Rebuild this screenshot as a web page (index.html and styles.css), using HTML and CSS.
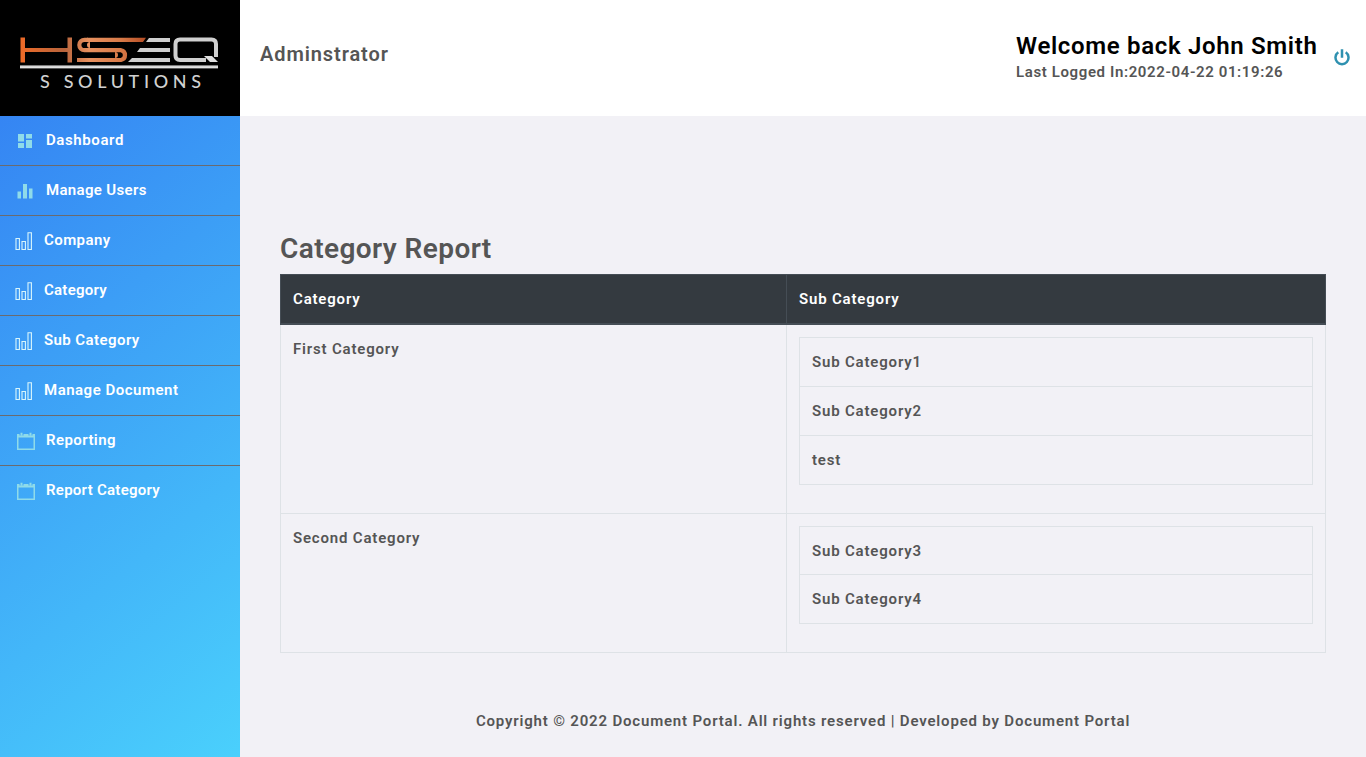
FILE: index.html
```html
<!DOCTYPE html>
<html lang="en">
<head>
<meta charset="utf-8">
<title>Category Report</title>
<link rel="stylesheet" href="styles.css">
</head>
<body>
<svg width="0" height="0" class="defs" aria-hidden="true">
  <symbol id="bars" viewBox="0 0 18 20"><path d="M1 7.500h3.400v11H1zM7 10.500h3.400v8H7zM13 1.800h3.400v16.700H13z" fill="none" stroke="#d9f6fb" stroke-width="1.100"/></symbol>
  <symbol id="calendar" viewBox="0 0 18 18"><path d="M0 2h2.500v1.500h4V2h5v1.500h4V2H18V18H0zM1.500 5.500V16.500h15V5.500z" fill-rule="evenodd"/><path d="M3.500 .8h2v3h-2zM12.500 .8h2v3h-2z"/></symbol>
</svg>
<div class="app">
  <aside class="sidebar">
    <div class="brand">
      <svg class="logo" width="240" height="116" viewBox="0 0 240 116">
        <defs>
          <linearGradient id="copper" gradientUnits="userSpaceOnUse" x1="20" y1="0" x2="146" y2="0"><stop offset="0" stop-color="#ee6a27"/><stop offset=".35" stop-color="#b7643c"/><stop offset=".55" stop-color="#e8915f"/><stop offset=".8" stop-color="#d87a48"/><stop offset="1" stop-color="#b64d24"/></linearGradient>
          <linearGradient id="silver" x1="0" y1="0" x2="0" y2="1"><stop offset="0" stop-color="#a8a8a8"/><stop offset=".6" stop-color="#f2f2f2"/><stop offset="1" stop-color="#aaa"/></linearGradient>
        </defs>
        <g fill="url(#copper)"><rect x="20.500" y="37.500" width="4.500" height="25"/><rect x="67.500" y="37.500" width="4.500" height="25"/><rect x="25" y="48" width="43" height="4"/><path d="M87 37.700h59l-3 4.300H87zM90 42a3 3 0 0 0-3 3a3 3 0 0 0 3 3zM115 52a3 3 0 0 1 3 3a3 3 0 0 1-3 3z"/></g>
        <g fill="none" stroke="url(#copper)">
          <path d="M88 39.800H84.500a5.200 5.200 0 0 0 0 10.400h36.500a5 5 0 0 1 0 9.800H77" stroke-width="4.200"/>
        </g>
        <g fill="#cfcfcf"><path d="M149 38h21v4h-24zM140 48h30v4h-33zM132 58h38v4h-42z"/></g>
        <path d="M206 60h-26q-4.500 0-4.500-4.500V44q0-4.500 4.500-4.500h31.500q4.500 0 4.500 4.500v13" fill="none" stroke="#d0d0d0" stroke-width="4"/>
        <path d="M204 56h8l6 6h-8z" fill="#e0e0e0"/>
        <rect x="20" y="65.300" width="198" height="3.200" fill="url(#silver)"/>
        <text x="40" y="87.500" textLength="161" class="logo-text">S SOLUTIONS</text>
      </svg>
    </div>
    <nav class="menu">
      <a class="item"><svg class="glyph" width="18" height="18" viewBox="0 0 18 18"><path d="M1 2h6v7.500H1zM1 11h6v5H1zM9 2h6v4.500H9zM9 8h6v8H9z"/></svg><span class="t-dashboard">Dashboard</span></a>
      <a class="item"><svg class="glyph" width="18" height="18" viewBox="0 0 18 18"><path d="M.5 9.500h3.500v7H.5zM6 2h4v14.500H6zM12 6.500h3.500v10H12z"/></svg><span class="t-users">Manage Users</span></a>
      <a class="item narrow"><svg width="18" height="20"><use href="#bars"/></svg><span class="t-company">Company</span></a>
      <a class="item narrow"><svg width="18" height="20"><use href="#bars"/></svg><span class="t-category">Category</span></a>
      <a class="item narrow"><svg width="18" height="20"><use href="#bars"/></svg><span class="t-sub">Sub Category</span></a>
      <a class="item narrow"><svg width="18" height="20"><use href="#bars"/></svg><span class="t-document">Manage Document</span></a>
      <a class="item"><svg class="glyph" width="18" height="18"><use href="#calendar"/></svg><span class="t-reporting">Reporting</span></a>
      <a class="item"><svg class="glyph" width="18" height="18"><use href="#calendar"/></svg><span class="t-report">Report Category</span></a>
    </nav>
  </aside>
  <div class="page">
    <header class="topbar">
      <h4 class="role">Adminstrator</h4>
      <div class="user"><h3 class="welcome">Welcome back John Smith</h3><p class="last">Last Logged In:2022-04-22 01:19:26</p></div>
      <svg class="power" width="16" height="17" viewBox="0 0 16 17" fill="none" stroke="#2f91b0" stroke-width="2.500"><path d="M4.300 3.300a6.500 6.500 0 1 0 7.400 0M8 .3v8.500"/></svg>
    </header>
    <main class="content">
      <h2 class="title">Category Report</h2>
      <table class="report">
        <colgroup><col class="c1"><col></colgroup>
        <thead><tr><th>Category</th><th>Sub Category</th></tr></thead>
        <tbody>
          <tr class="first"><td>First Category</td><td><table class="inner"><tr><td>Sub Category1</td></tr><tr><td>Sub Category2</td></tr><tr><td>test</td></tr></table></td></tr>
          <tr class="second"><td>Second Category</td><td><table class="inner short"><tr><td>Sub Category3</td></tr><tr><td>Sub Category4</td></tr></table></td></tr>
        </tbody>
      </table>
    </main>
    <footer class="footer"><span>Copyright © 2022 Document Portal. All rights reserved | Developed by Document Portal</span></footer>
  </div>
</div>
</body>
</html>
```
FILE: styles.css
```css
* { box-sizing: border-box; }
body { margin: 0; background: #f2f1f6; color: #555; font: 600 15px/24px Roboto, "Liberation Sans", sans-serif; letter-spacing: .82px; overflow: hidden; }
h2, h3, h4, p { margin: 0; }
.defs { position: absolute; }
.app { display: flex; height: 757px; }
.sidebar { width: 240px; flex: none; display: flex; flex-direction: column; }
.brand { height: 116px; background: #000; flex: none; }
.logo { display: block; }
.logo-text { font: 500 18px Lato, sans-serif; letter-spacing: 0; fill: #d0d0d0; }
.menu { flex: 1; background: linear-gradient(140deg, #3585f3, #4ad0fc); letter-spacing: .42px; }
.item { display: flex; align-items: center; height: 50px; padding: 0 0 1px 17px; gap: 11px; color: #fff; border-bottom: 1px solid #6a6b70; }
.item:last-child { border-bottom-color: transparent; }
.item.narrow { padding-left: 15px; }
.item svg { flex: none; margin-top: 2px; }
.t-dashboard { letter-spacing: .6px; }
.t-users { letter-spacing: .34px; }
.t-category { letter-spacing: .25px; }
.t-document { letter-spacing: .5px; }
.t-report { letter-spacing: .27px; }
.glyph { fill: #8fdbe9; }
.page { flex: 1; display: flex; flex-direction: column; }
.topbar { height: 116px; background: #fff; display: flex; align-items: flex-start; padding: 0 16px 0 20px; }
.role { margin-top: 42px; font-size: 20px; font-weight: 600; letter-spacing: .9px; }
.user { margin: 32px 0 0 auto; width: 318px; }
.welcome { color: #000; font-size: 24px; line-height: 28px; font-weight: 600; letter-spacing: .67px; }
.last { letter-spacing: .62px; }
.power { margin-top: 49px; }
.content { padding: 116px 40px 0; }
.title { font-size: 28px; line-height: 34px; font-weight: 600; margin-bottom: 8px; letter-spacing: .42px; }
table { border-collapse: collapse; table-layout: fixed; width: 100%; }
.c1 { width: 506px; }
th, td { border: 1px solid #dee2e6; padding: 12px; text-align: left; vertical-align: top; }
th { background: #343a40; color: #fff; border-color: #454d55; border-bottom-width: 2px; font-weight: 600; }
thead tr { height: 49px; }
.first { height: 189px; }
.second { height: 139px; }
.inner { width: 514px; }
.short td { padding-bottom: 11.5px; }
.footer { margin-top: 56px; text-align: center; }
```
